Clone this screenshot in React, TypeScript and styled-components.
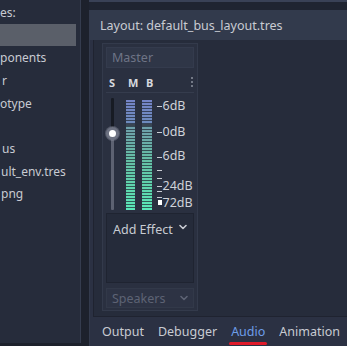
import styled, { createGlobalStyle } from "styled-components";

const Global = createGlobalStyle`
  html, body { margin: 0; padding: 0; background: #1d212c; }
  body { font-family: "Noto Sans", "DejaVu Sans", sans-serif; }
`;

const Screen = styled.div`
  width: 347px;
  height: 346px;
  display: flex;
  background: #1d212c;
  overflow: hidden;
`;

/* ---------- left: filesystem dock ---------- */
const Dock = styled.div`
  width: 81px;
  height: 343px;
  flex: none;
  background: #262c3b;
  border-right: 1px solid #353c4e;
  display: flex;
  flex-direction: column;
  padding-top: 1px;
  box-sizing: border-box;
  overflow: hidden;
`;

const DockRow = styled.div<{ $indent: number; $selected?: boolean }>`
  height: 22.7px;
  flex: none;
  display: flex;
  align-items: center;
  padding-left: ${(p) => p.$indent}px;
  margin-right: 4px;
  font-size: 12px;
  color: #c8cbd2;
  white-space: nowrap;
  background: ${(p) => (p.$selected ? "#5a5f69" : "transparent")};
`;

/* ---------- right side ---------- */
const RightCol = styled.div`
  flex: 1;
  display: flex;
  flex-direction: column;
  margin-left: 8px;
`;

const TopStrip = styled.div`
  height: 8px;
  flex: none;
  border-top: 2px solid #394156;
  background: #1f2431;
`;

const Panel = styled.div`
  flex: 1;
  display: flex;
  flex-direction: column;
  background: #2b3143;
  border-left: 1px solid #333a4c;
`;

const Header = styled.div`
  height: 30px;
  flex: none;
  display: flex;
  align-items: center;
  padding-left: 10px;
  background: #323a4c;
  color: #c8cbd2;
  font-size: 12.5px;
`;

const BusArea = styled.div`
  height: 277px;
  flex: none;
  margin-left: 3px;
  background: #262c3b;
  border-left: 1px solid #1f2330;
  border-bottom: 1px solid #1f2330;
  padding: 3px 0 0 8px;
  box-sizing: border-box;
`;

const Strip = styled.div`
  width: 96px;
  height: 268px;
  background: #2a3040;
  border: 1px solid #333a4b;
  box-sizing: border-box;
  display: flex;
  flex-direction: column;
  padding: 3px 3px 0 3px;
`;

const NameBox = styled.div`
  height: 21px;
  flex: none;
  background: #2f3647;
  border: 1px solid #343b4d;
  box-sizing: border-box;
  display: flex;
  align-items: center;
  padding-left: 5px;
  color: #6e7486;
  font-size: 12.5px;
`;

const ToggleRow = styled.div`
  height: 25px;
  flex: none;
  display: flex;
  align-items: center;
  padding: 4px 0 0 3px;
  box-sizing: border-box;
  border-bottom: 1px solid #353c4d;
`;

const Toggle = styled.span<{ $w: number }>`
  width: ${(p) => p.$w}px;
  font-size: 11px;
  font-weight: 700;
  color: #d6d9df;
`;

const Dots = styled.span`
  margin-left: auto;
  margin-right: 1px;
  display: flex;
  flex-direction: column;
  gap: 2px;
  & > i {
    width: 2px;
    height: 2px;
    border-radius: 1px;
    background: #8d929e;
  }
`;

const Meters = styled.div`
  height: 118px;
  flex: none;
  display: flex;
  padding-top: 5px;
  box-sizing: border-box;
`;

const Slider = styled.div`
  position: relative;
  width: 3px;
  height: 112px;
  margin: 0 0 0 5px;
  background: linear-gradient(to bottom, #171b24 0 31%, #5d6272 31% 100%);
  border-radius: 1px;
`;

const Knob = styled.div`
  position: absolute;
  left: -5px;
  top: 29px;
  width: 7px;
  height: 7px;
  border-radius: 50%;
  background: #ffffff;
  border: 3px solid #6d7282;
  box-shadow: 0 0 0 1px rgba(140, 146, 160, 0.4);
`;

const Bar = styled.div<{ $ml: number }>`
  width: 10px;
  height: 110px;
  margin: 2px 0 0 ${(p) => p.$ml}px;
  background:
    repeating-linear-gradient(to bottom, transparent 0 2px, rgba(30, 36, 48, 0.7) 2px 3px),
    linear-gradient(
      to bottom,
      #7584c8 0%,
      #6d8bbd 21.5%,
      #3a4552 22% 23.5%,
      #6e9eab 24%,
      #65bfa6 55%,
      #5edbb0 85%,
      #5ae8ba 100%
    );
`;

const Scale = styled.div`
  position: relative;
  width: 40px;
  height: 112px;
  margin-left: 5px;
`;

const Tick = styled.div`
  position: absolute;
  left: 0;
  width: 5px;
  height: 1px;
  background: #c9ccd3;
`;

const Peak = styled.div`
  position: absolute;
  left: 1px;
  top: 102px;
  width: 4px;
  height: 5px;
  background: #ffffff;
`;

const DbLabel = styled.div`
  position: absolute;
  left: 6px;
  font-size: 12.5px;
  line-height: 14px;
  color: #cfd2d9;
  white-space: nowrap;
`;

const EffectBox = styled.div`
  height: 70px;
  flex: none;
  margin-top: 2px;
  background: #252b3a;
  border: 1px solid #1f2431;
  box-sizing: border-box;
  display: flex;
  align-items: flex-start;
  padding: 7px 6px 0 6px;
  color: #c8cbd2;
  font-size: 12.5px;
`;

const ChevronSlot = styled.span`
  margin-left: auto;
  margin-top: 3px;
  display: flex;
`;

const Select = styled.div`
  height: 20px;
  flex: none;
  margin-top: 5px;
  background: #2d3344;
  border: 1px solid #323949;
  box-sizing: border-box;
  display: flex;
  align-items: center;
  padding: 0 5px;
  color: #5d6374;
  font-size: 12.5px;
`;

const Chevron = ({ color }: { color: string }) => (
  <svg width="8" height="6" viewBox="0 0 8 6" style={{ marginLeft: "auto" }}>
    <path d="M1 1.5 L4 4.5 L7 1.5" fill="none" stroke={color} strokeWidth="1.6" strokeLinecap="round" strokeLinejoin="round" />
  </svg>
);

const Tabs = styled.div`
  flex: 1;
  display: flex;
  align-items: center;
  padding-left: 12px;
  gap: 14px;
`;

const Tab = styled.span<{ $active?: boolean }>`
  position: relative;
  font-size: 12.5px;
  color: ${(p) => (p.$active ? "#6d9ee9" : "#c8cbd2")};
  &::after {
    content: "";
    display: ${(p) => (p.$active ? "block" : "none")};
    position: absolute;
    left: -2px;
    right: -2px;
    bottom: -5px;
    height: 3px;
    border-radius: 2px;
    background: #e01b2a;
  }
`;

const files: { text: string; indent: number; selected?: boolean }[] = [
  { text: "es:", indent: 0 },
  { text: "", indent: 0, selected: true },
  { text: "ponents", indent: 0 },
  { text: "r", indent: 2 },
  { text: "otype", indent: 0 },
  { text: "", indent: 0 },
  { text: "us", indent: 2 },
  { text: "ult_env.tres", indent: 1 },
  { text: "png", indent: 1 },
];

const ticks = [8, 34, 59, 72, 80, 88, 93, 99];
const labels = [
  { t: "6dB", y: 1 },
  { t: "0dB", y: 27 },
  { t: "6dB", y: 51 },
  { t: "24dB", y: 81 },
  { t: "72dB", y: 98 },
];

export default function App() {
  return (
    <Screen>
      <Global />
      <Dock>
        {files.map((f, i) => (
          <DockRow key={i} $indent={f.indent} $selected={f.selected}>
            {f.text}
          </DockRow>
        ))}
      </Dock>
      <RightCol>
        <TopStrip />
        <Panel>
          <Header>Layout: default_bus_layout.tres</Header>
          <BusArea>
            <Strip>
              <NameBox>Master</NameBox>
              <ToggleRow>
                <Toggle $w={19}>S</Toggle>
                <Toggle $w={18}>M</Toggle>
                <Toggle $w={12}>B</Toggle>
                <Dots>
                  <i />
                  <i />
                  <i />
                </Dots>
              </ToggleRow>
              <Meters>
                <Slider>
                  <Knob />
                </Slider>
                <Bar $ml={12} />
                <Bar $ml={7} />
                <Scale>
                  {ticks.map((y) => (
                    <Tick key={y} style={{ top: y }} />
                  ))}
                  <Peak />
                  {labels.map((l) => (
                    <DbLabel key={l.y} style={{ top: l.y }}>
                      {l.t}
                    </DbLabel>
                  ))}
                </Scale>
              </Meters>
              <EffectBox>
                Add Effect
                <ChevronSlot>
                  <Chevron color="#c8cbd2" />
                </ChevronSlot>
              </EffectBox>
              <Select>
                Speakers
                <Chevron color="#5d6374" />
              </Select>
            </Strip>
          </BusArea>
          <Tabs>
            <Tab>Output</Tab>
            <Tab>Debugger</Tab>
            <Tab $active>Audio</Tab>
            <Tab>Animation</Tab>
          </Tabs>
        </Panel>
      </RightCol>
    </Screen>
  );
}
